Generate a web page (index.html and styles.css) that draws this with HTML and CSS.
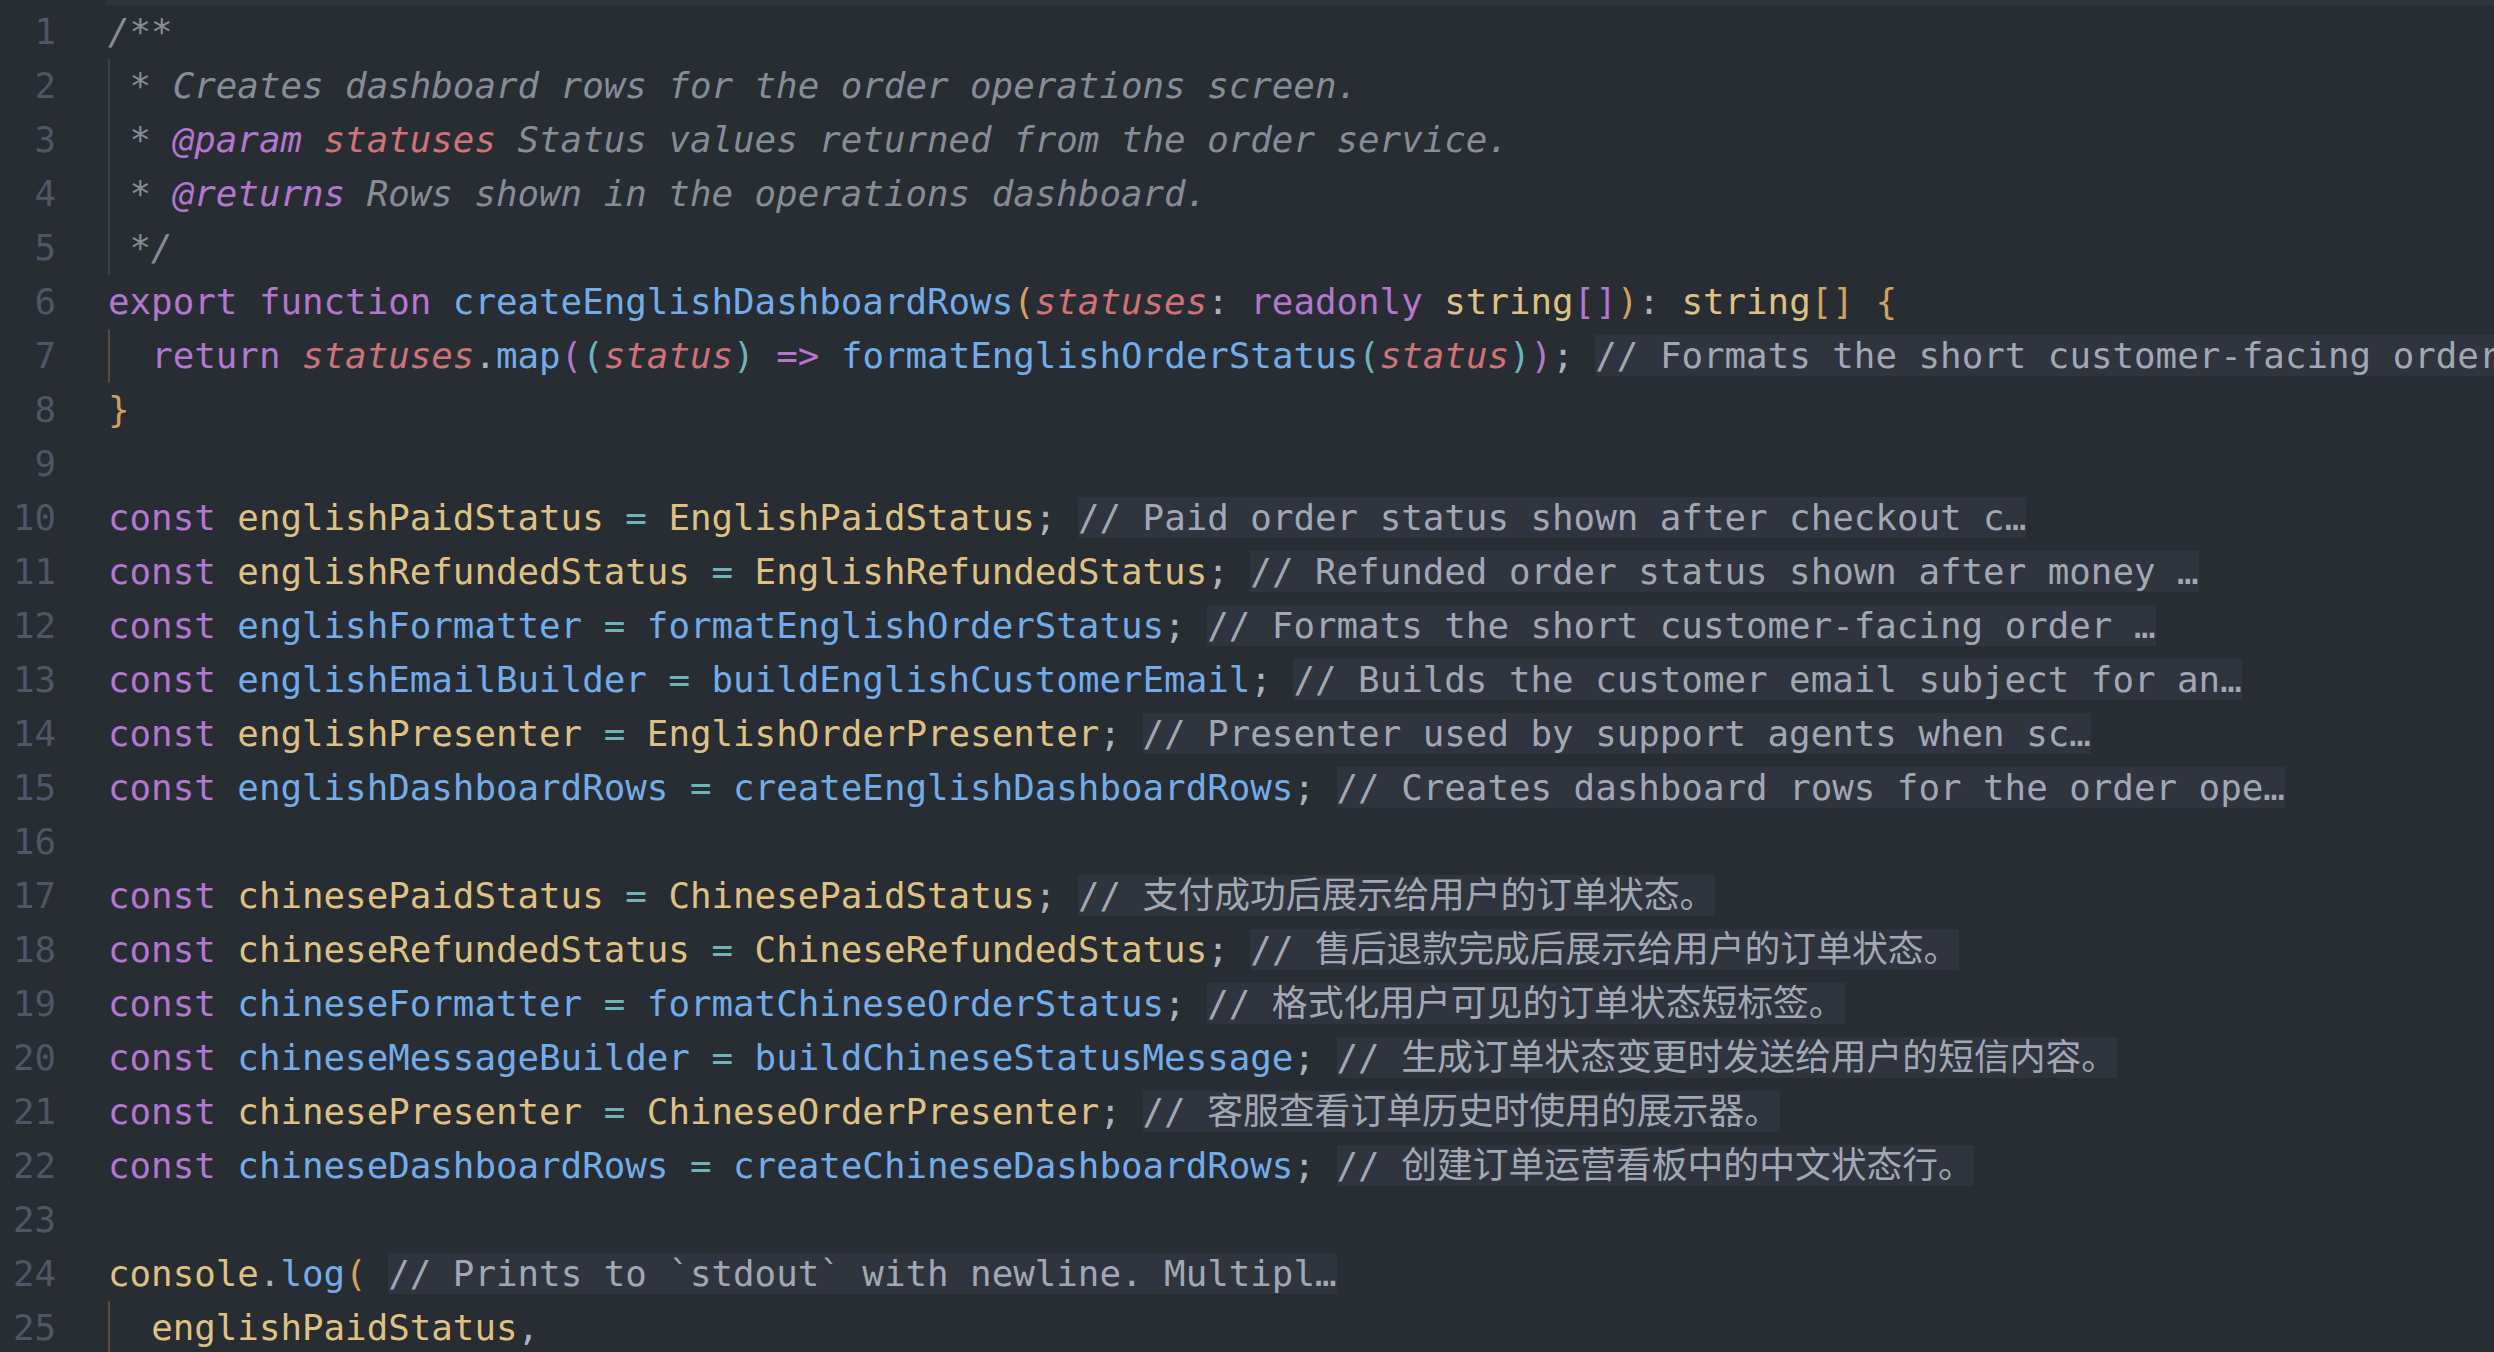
FILE: index.html
```html
<!DOCTYPE html>
<html lang="en">
<head>
<meta charset="utf-8">
<title>Editor</title>
<link rel="stylesheet" href="styles.css">
</head>
<body>
<div class="editor">
  <div class="topstrip"><div class="topstrip-gutter"></div><div class="topstrip-fill"></div></div>
  <div class="lines">
    <div class="line"><span class="ln">1</span><span class="code"><span class="cm">/**</span></span></div>
    <div class="line"><span class="ln">2</span><span class="code"><span class="g"> </span><span class="cm">* Creates dashboard rows for the order operations screen.</span></span></div>
    <div class="line"><span class="ln">3</span><span class="code"><span class="g"> </span><span class="cm">* </span><span class="cm-tag">@param</span><span class="cm"> </span><span class="cm-par">statuses</span><span class="cm"> Status values returned from the order service.</span></span></div>
    <div class="line"><span class="ln">4</span><span class="code"><span class="g"> </span><span class="cm">* </span><span class="cm-tag">@returns</span><span class="cm"> Rows shown in the operations dashboard.</span></span></div>
    <div class="line"><span class="ln">5</span><span class="code"><span class="g"> </span><span class="cm">*/</span></span></div>
    <div class="line"><span class="ln">6</span><span class="code"><span class="kw">export</span> <span class="kw">function</span> <span class="fn">createEnglishDashboardRows</span><span class="b1">(</span><span class="par">statuses</span><span class="p">:</span> <span class="kw">readonly</span> <span class="ty">string</span><span class="b2">[]</span><span class="b1">)</span><span class="p">:</span> <span class="ty">string</span><span class="b1">[]</span> <span class="b1">{</span></span></div>
    <div class="line"><span class="ln">7</span><span class="code"><span class="g ga"> </span> <span class="kw">return</span> <span class="par">statuses</span><span class="p">.</span><span class="fn">map</span><span class="b2">(</span><span class="b3">(</span><span class="par">status</span><span class="b3">)</span> <span class="kw">=&gt;</span> <span class="fn">formatEnglishOrderStatus</span><span class="b3">(</span><span class="par">status</span><span class="b3">)</span><span class="b2">)</span><span class="p">;</span> <span class="hint">// Formats the short customer-facing order status label.</span></span></div>
    <div class="line"><span class="ln">8</span><span class="code"><span class="b1">}</span></span></div>
    <div class="line"><span class="ln">9</span><span class="code"></span></div>
    <div class="line"><span class="ln">10</span><span class="code"><span class="kw">const</span> <span class="ty">englishPaidStatus</span> <span class="op">=</span> <span class="ty">EnglishPaidStatus</span><span class="p">;</span> <span class="hint">// Paid order status shown after checkout c…</span></span></div>
    <div class="line"><span class="ln">11</span><span class="code"><span class="kw">const</span> <span class="ty">englishRefundedStatus</span> <span class="op">=</span> <span class="ty">EnglishRefundedStatus</span><span class="p">;</span> <span class="hint">// Refunded order status shown after money …</span></span></div>
    <div class="line"><span class="ln">12</span><span class="code"><span class="kw">const</span> <span class="fn">englishFormatter</span> <span class="op">=</span> <span class="fn">formatEnglishOrderStatus</span><span class="p">;</span> <span class="hint">// Formats the short customer-facing order …</span></span></div>
    <div class="line"><span class="ln">13</span><span class="code"><span class="kw">const</span> <span class="fn">englishEmailBuilder</span> <span class="op">=</span> <span class="fn">buildEnglishCustomerEmail</span><span class="p">;</span> <span class="hint">// Builds the customer email subject for an…</span></span></div>
    <div class="line"><span class="ln">14</span><span class="code"><span class="kw">const</span> <span class="ty">englishPresenter</span> <span class="op">=</span> <span class="ty">EnglishOrderPresenter</span><span class="p">;</span> <span class="hint">// Presenter used by support agents when sc…</span></span></div>
    <div class="line"><span class="ln">15</span><span class="code"><span class="kw">const</span> <span class="fn">englishDashboardRows</span> <span class="op">=</span> <span class="fn">createEnglishDashboardRows</span><span class="p">;</span> <span class="hint">// Creates dashboard rows for the order ope…</span></span></div>
    <div class="line"><span class="ln">16</span><span class="code"></span></div>
    <div class="line"><span class="ln">17</span><span class="code"><span class="kw">const</span> <span class="ty">chinesePaidStatus</span> <span class="op">=</span> <span class="ty">ChinesePaidStatus</span><span class="p">;</span> <span class="hint">// 支付成功后展示给用户的订单状态。</span></span></div>
    <div class="line"><span class="ln">18</span><span class="code"><span class="kw">const</span> <span class="ty">chineseRefundedStatus</span> <span class="op">=</span> <span class="ty">ChineseRefundedStatus</span><span class="p">;</span> <span class="hint">// 售后退款完成后展示给用户的订单状态。</span></span></div>
    <div class="line"><span class="ln">19</span><span class="code"><span class="kw">const</span> <span class="fn">chineseFormatter</span> <span class="op">=</span> <span class="fn">formatChineseOrderStatus</span><span class="p">;</span> <span class="hint">// 格式化用户可见的订单状态短标签。</span></span></div>
    <div class="line"><span class="ln">20</span><span class="code"><span class="kw">const</span> <span class="fn">chineseMessageBuilder</span> <span class="op">=</span> <span class="fn">buildChineseStatusMessage</span><span class="p">;</span> <span class="hint">// 生成订单状态变更时发送给用户的短信内容。</span></span></div>
    <div class="line"><span class="ln">21</span><span class="code"><span class="kw">const</span> <span class="ty">chinesePresenter</span> <span class="op">=</span> <span class="ty">ChineseOrderPresenter</span><span class="p">;</span> <span class="hint">// 客服查看订单历史时使用的展示器。</span></span></div>
    <div class="line"><span class="ln">22</span><span class="code"><span class="kw">const</span> <span class="fn">chineseDashboardRows</span> <span class="op">=</span> <span class="fn">createChineseDashboardRows</span><span class="p">;</span> <span class="hint">// 创建订单运营看板中的中文状态行。</span></span></div>
    <div class="line"><span class="ln">23</span><span class="code"></span></div>
    <div class="line"><span class="ln">24</span><span class="code"><span class="ty">console</span><span class="p">.</span><span class="fn">log</span><span class="b1">(</span> <span class="hint">// Prints to `stdout` with newline. Multipl…</span></span></div>
    <div class="line"><span class="ln">25</span><span class="code"><span class="g ga"> </span> <span class="ty">englishPaidStatus</span><span class="p">,</span></span></div>
  </div>
</div>
</body>
</html>
```

FILE: styles.css
```css
html, body {
  margin: 0;
  padding: 0;
  background: #282c33;
}

.editor {
  width: 2494px;
  height: 1352px;
  overflow: hidden;
  background: #282c33;
  font-family: "DejaVu Sans Mono", "Noto Sans CJK SC", monospace;
  font-size: 35.8px;
  color: #acb2be;
}

.topstrip {
  display: flex;
  height: 5px;
}

.topstrip-gutter {
  width: 106px;
  flex: none;
}

.topstrip-fill {
  flex: 1;
  background: #2e333c;
}

.lines {
  display: flex;
  flex-direction: column;
}

.line {
  display: flex;
  align-items: center;
  height: 54px;
  line-height: 54px;
  white-space: pre;
}

.ln {
  flex: none;
  width: 56px;
  text-align: right;
  color: #4f5665;
  padding-right: 52px;
}

.code {
  flex: none;
  height: 54px;
  white-space: pre;
}

.g {
  display: inline-block;
  height: 54px;
  vertical-align: top;
  box-shadow: inset 2px 0 0 #3b404a;
}

.g.ga {
  box-shadow: inset 2px 0 0 #5a4a37;
}

.cm {
  color: #878d97;
  font-style: italic;
}

.cm-tag {
  color: #b477cf;
  font-style: italic;
}

.cm-par {
  color: #d07277;
  font-style: italic;
}

.kw {
  color: #b477cf;
}

.fn {
  color: #73ade9;
}

.ty {
  color: #dfc184;
}

.par {
  color: #d07277;
  font-style: italic;
}

.p {
  color: #acb2be;
}

.op {
  color: #6eb4bf;
}

.b1 {
  color: #d3a15f;
}

.b2 {
  color: #b477cf;
}

.b3 {
  color: #6eb4bf;
}

.hint {
  display: inline-block;
  height: 41px;
  line-height: 41px;
  background: #2f343e;
  color: #a2a8b3;
}
```
